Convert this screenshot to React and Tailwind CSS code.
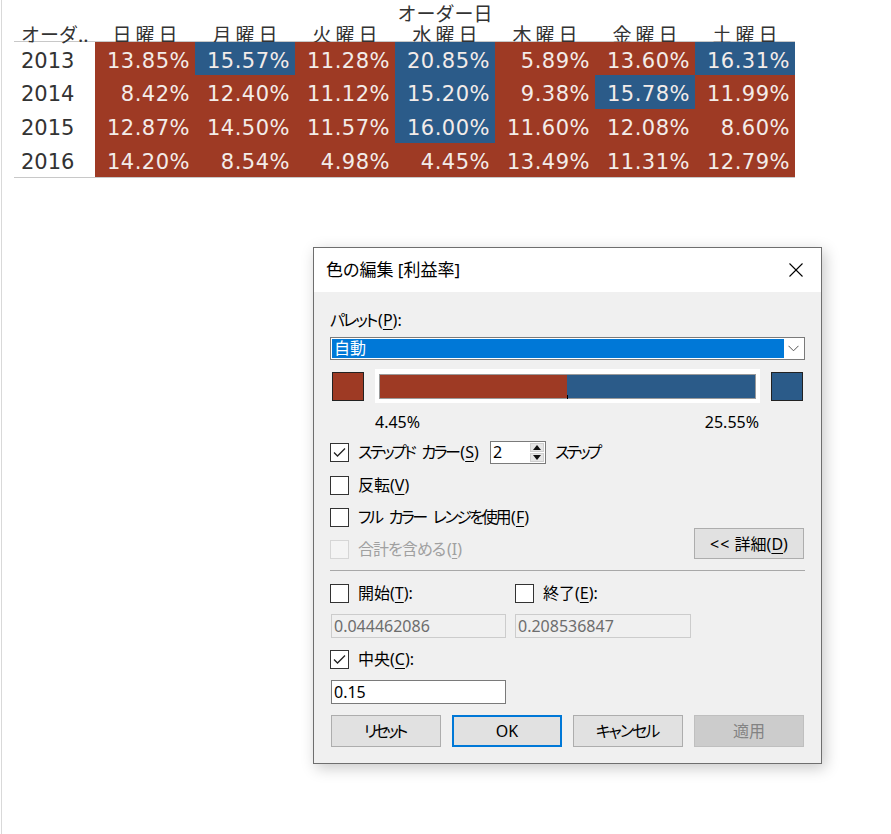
import React from "react";

const UI = "font-['Noto_Sans','Noto_Sans_CJK_JP',sans-serif] [font-feature-settings:'palt']";
const TB = "font-['DejaVu_Sans','Noto_Sans_CJK_JP',sans-serif]";
const CJK = "font-['Noto_Sans_CJK_JP',sans-serif]";

const days = ["日曜日", "月曜日", "火曜日", "水曜日", "木曜日", "金曜日", "土曜日"];
const rows = [
  ["2013", ["13.85%", "15.57%", "11.28%", "20.85%", "5.89%", "13.60%", "16.31%"]],
  ["2014", ["8.42%", "12.40%", "11.12%", "15.20%", "9.38%", "15.78%", "11.99%"]],
  ["2015", ["12.87%", "14.50%", "11.57%", "16.00%", "11.60%", "12.08%", "8.60%"]],
  ["2016", ["14.20%", "8.54%", "4.98%", "4.45%", "13.49%", "11.31%", "12.79%"]],
];
const rowH = ["h-[33px]", "h-[34px]", "h-[34px]", "h-[34px]"];

function M({ pre, k, post = "", tr = "" }) {
  const words = pre.split(" ");
  return (
    <span className="whitespace-nowrap">
      {words.map((w, i) => (
        <span key={i} className={tr + (i > 0 ? " ml-[7px]" : "")}>
          {w}
        </span>
      ))}
      <span className={tr ? "ml-[2px]" : ""}>(</span>
      <span className="underline underline-offset-[3px]">{k}</span>){post}
    </span>
  );
}

function Check({ checked, disabled }) {
  return (
    <div
      className={
        "w-[19px] h-[19px] shrink-0 border flex items-center justify-center " +
        (disabled ? "border-[#d6d6d6] bg-[#f4f4f4]" : "border-[#333333] bg-white")
      }
    >
      {checked && (
        <svg width="15" height="15" viewBox="0 0 15 15">
          <polyline points="2,7.5 5.5,11 13,3.5" fill="none" stroke="#222" strokeWidth="1.3" />
        </svg>
      )}
    </div>
  );
}

function CheckRow({ checked, disabled, children, className = "" }) {
  return (
    <div className={"flex items-center h-[24px] " + className}>
      <Check checked={checked} disabled={disabled} />
      <span className={"ml-[9px] text-[16px] leading-[24px] " + (disabled ? "text-[#a0a0a0]" : "text-black")}>
        {children}
      </span>
    </div>
  );
}

function Btn({ children, variant }) {
  let cls = "border border-[#adadad] bg-[#e1e1e1] text-black";
  if (variant === "primary") cls = "border-2 border-[#0078d7] bg-[#e1e1e1] text-black";
  if (variant === "disabled") cls = "border border-[#bfbfbf] bg-[#cccccc] text-[#838383]";
  return (
    <div className={"w-[110px] h-[32px] flex items-center justify-center text-[16px] " + cls}>{children}</div>
  );
}

export default function App() {
  return (
    <div className="relative w-[891px] h-[834px] overflow-hidden bg-white flex">
      <div className="ml-px w-px h-full bg-[#d9d9d9] shrink-0" />
      {/* Table */}
      <div className="ml-[12px] w-[781px] text-[#333333]">
        <div className="h-[42px] border-b border-[#c8c8c8]">
          <div className="flex h-[23px]">
            <div className="w-[81px]" />
            <div className={"w-[700px] text-center text-[19px] leading-[19px] pt-[3px] " + CJK}>オーダー日</div>
          </div>
          <div className="flex h-[19px] items-end">
            <div className={"w-[81px] pl-[7px] text-[19px] leading-[17px] " + CJK}>オーダ..</div>
            {days.map((d) => (
              <div key={d} className={"w-[100px] text-center text-[19px] leading-[17px] tracking-[4px] pl-[4px] " + CJK}>
                {d}
              </div>
            ))}
          </div>
        </div>
        <div className="border-b border-[#c8c8c8]">
          {rows.map(([y, vals], i) => (
            <div key={y} className={"flex " + rowH[i]}>
              <div className={"w-[81px] pl-[7px] pt-[6px] flex items-center text-[21px] " + TB}>{y}</div>
              {vals.map((v, j) => (
                <div
                  key={j}
                  className={
                    "w-[100px] flex items-center justify-end pr-[5px] pt-[6px] text-[21px] tracking-[0.5px] text-[#f3ece9] " +
                    TB +
                    " " +
                    (parseFloat(v) >= 15 ? "bg-[#2b5b89]" : "bg-[#9e3a24]")
                  }
                >
                  {v}
                </div>
              ))}
            </div>
          ))}
        </div>
      </div>

      {/* Dialog */}
      <div
        className={
          "absolute left-[313px] top-[247px] w-[509px] border border-[#6e6e6e] bg-[#f0f0f0] shadow-[3px_4px_14px_rgba(0,0,0,0.22)] " +
          UI
        }
      >
        <div className="h-[44px] bg-white flex items-center justify-between pl-[12px] pr-[18px]">
          <span className="text-[17px] text-black">色の編集 [利益率]</span>
          <svg width="14" height="14" viewBox="0 0 14 14">
            <line x1="0.5" y1="0.5" x2="13.5" y2="13.5" stroke="#000" strokeWidth="1.1" />
            <line x1="13.5" y1="0.5" x2="0.5" y2="13.5" stroke="#000" strokeWidth="1.1" />
          </svg>
        </div>
        <div className="px-[16px] pb-[16px]">
          <div className="mt-[17px] h-[22px] flex items-center text-[16px] text-black">
            <M pre="パレット" k="P" post=":" tr="tracking-[-2px]" />
          </div>
          <div className="mt-[6px] h-[23px] border border-[#7a7a7a] bg-white flex items-center pl-[1px] pr-[1px]">
            <div className="h-[19px] flex-1 bg-[#0078d7] text-white text-[16px] leading-[19px] pl-[2px]">自動</div>
            <div className="w-[19px] flex items-center justify-center">
              <svg width="11" height="7" viewBox="0 0 11 7">
                <polyline points="0.5,0.8 5.5,5.8 10.5,0.8" fill="none" stroke="#555" strokeWidth="1" />
              </svg>
            </div>
          </div>
          <div className="mt-[9px] h-[34px] flex items-center">
            <div className="ml-[2px] w-[32px] h-[29px] border border-[#222] bg-[#9e3a24]" />
            <div className="ml-[11px] w-[385px] h-[34px] bg-white pt-[5px] pb-[4px] px-[4px]">
              <div className="relative h-full border border-[#9a9a9a] flex">
                <div className="w-[187px] bg-[#9e3a24]" />
                <div className="flex-1 bg-[#2b5b89]" />
                <div className="absolute left-[187px] bottom-[-1px] w-px h-[4px] bg-black" />
              </div>
            </div>
            <div className="ml-[11px] w-[32px] h-[29px] border border-[#222] bg-[#2b5b89]" />
          </div>
          <div className="mt-[9px] h-[20px] flex items-center justify-between pl-[45px] pr-[46px] text-[16px] text-black">
            <span>4.45%</span>
            <span>25.55%</span>
          </div>
          <div className="mt-[8px] h-[24px] flex items-center">
            <div className="w-[160px] flex items-center">
              <Check checked />
              <span className="ml-[9px] text-[16px] text-black">
                <M pre="ステップド カラー" k="S" tr="tracking-[-2.5px]" />
              </span>
            </div>
            <div className="w-[56px] h-[23px] border border-[#7a7a7a] bg-white flex items-stretch">
              <span className="flex-1 pl-[2px] text-[16px] leading-[21px] text-black">2</span>
              <div className="w-[15px] flex flex-col p-px pl-0 gap-px">
                <div className="flex-1 bg-[#e6e6e6] border border-[#cfcfcf] flex items-center justify-center">
                  <svg width="8" height="5" viewBox="0 0 8 5">
                    <polygon points="0,5 4,0 8,5" fill="#111" />
                  </svg>
                </div>
                <div className="flex-1 bg-[#e6e6e6] border border-[#cfcfcf] flex items-center justify-center">
                  <svg width="8" height="5" viewBox="0 0 8 5">
                    <polygon points="0,0 8,0 4,5" fill="#111" />
                  </svg>
                </div>
              </div>
            </div>
            <span className="ml-[9px] text-[16px] text-black tracking-[-3px]">ステップ</span>
          </div>
          <CheckRow className="mt-[9px]">
            <M pre="反転" k="V" />
          </CheckRow>
          <div className="mt-[8px] flex justify-between">
            <div>
              <CheckRow>
                <M pre="フル カラー レンジを使用" k="F" tr="tracking-[-2.4px]" />
              </CheckRow>
              <CheckRow className="mt-[8px]" disabled>
                <M pre="合計を含める" k="I" tr="tracking-[-1px]" />
              </CheckRow>
            </div>
            <div className="self-end mb-[2px] mr-px w-[110px] h-[31px] border border-[#adadad] bg-[#e1e1e1] flex items-center justify-center text-[16px] text-black">
              <span className="whitespace-nowrap">
                <span className="tracking-[1px]">&lt;&lt;</span> <M pre="詳細" k="D" />
              </span>
            </div>
          </div>
          <div className="mt-[9px] h-px bg-[#a8a8a8]" />
          <div className="mt-[10px] flex">
            <CheckRow className="w-[185px]">
              <M pre="開始" k="T" post=":" />
            </CheckRow>
            <CheckRow>
              <M pre="終了" k="E" post=":" />
            </CheckRow>
          </div>
          <div className="mt-[9px] flex">
            <div className="ml-px w-[175px] h-[24px] border border-[#cccccc] bg-[#f0f0f0] pl-[2px] text-[16px] leading-[22px] text-[#6d6d6d]">
              0.044462086
            </div>
            <div className="ml-[9px] w-[176px] h-[24px] border border-[#cccccc] bg-[#f0f0f0] pl-[2px] text-[16px] leading-[22px] text-[#6d6d6d]">
              0.208536847
            </div>
          </div>
          <CheckRow className="mt-[9px]" checked>
            <M pre="中央" k="C" post=":" />
          </CheckRow>
          <div className="mt-[9px] ml-px w-[175px] h-[24px] border border-[#7a7a7a] bg-white pl-[2px] text-[16px] leading-[22px] text-black">
            0.15
          </div>
          <div className="mt-[11px] ml-px flex gap-[11px]">
            <Btn>
              <span className="tracking-[-3px] pr-[3px]">リセット</span>
            </Btn>
            <Btn variant="primary">OK</Btn>
            <Btn>
              <span className="tracking-[-2px] pr-[2px]">キャンセル</span>
            </Btn>
            <Btn variant="disabled">適用</Btn>
          </div>
        </div>
      </div>
    </div>
  );
}
